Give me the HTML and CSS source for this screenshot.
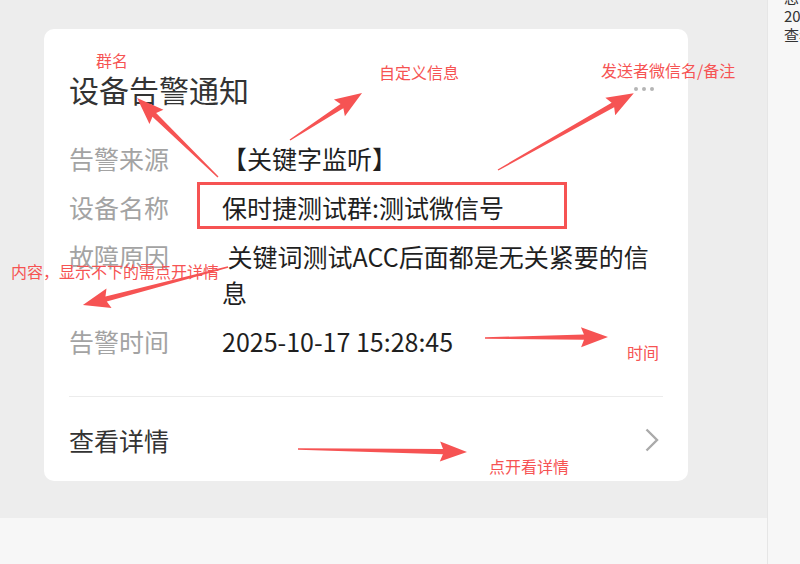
FILE: index.html
```html
<!DOCTYPE html>
<html lang="zh-CN">
<head>
    <meta charset="UTF-8">
    <meta name="viewport" content="width=device-width, initial-scale=1.0">
    <title>设备告警通知</title>
    <link rel="stylesheet" href="styles.css">
</head>
<body>

    <div class="app">
        <div class="main">
            <!-- 聊天区 -->
            <div class="chat">
                <div class="card">
                    <div class="card-head">
                        <div class="card-title">设备告警通知</div>
                        <div class="dots"><i></i><i></i><i></i></div>
                    </div>

                    <div class="rows">
                        <div class="row">
                            <div class="label">告警来源</div>
                            <div class="value">【关键字监听】</div>
                        </div>
                        <div class="row">
                            <div class="label">设备名称</div>
                            <div class="value">保时捷测试群:测试微信号</div>
                        </div>
                        <div class="row">
                            <div class="label">故障原因</div>
                            <div class="value">&nbsp;关键词测试ACC后面都是无关紧要的信息</div>
                        </div>
                        <div class="row">
                            <div class="label">告警时间</div>
                            <div class="value">2025-10-17 15:28:45</div>
                        </div>
                    </div>

                    <div class="card-foot">
                        <span>查看详情</span>
                        <svg class="chevron" width="14" height="24" viewBox="0 0 14 24">
                            <polyline points="1.5,1.5 12,12 1.5,22.5" fill="none" stroke="#aaaaaa" stroke-width="2.4"/>
                        </svg>
                    </div>
                </div>
            </div>
            <div class="footer"></div>
        </div>

        <!-- 右侧被截断的列表 -->
        <div class="side">
            <div>息</div>
            <div>2025-10-17 15:28:45</div>
            <div>查看详情</div>
        </div>
    </div>

    <!-- 标注 -->
    <div class="notes">
        <svg class="arrows" width="800" height="564" viewBox="0 0 800 564">
            <rect x="198.5" y="183.5" width="367" height="44" fill="none" stroke="#f65353" stroke-width="3"/>
            <g fill="#f65353">
                <path transform="translate(218 177) rotate(-135.7)" d="M0,-0.7 L89,-2.6 L86,-10 L113,0 L86,10 L89,2.6 L0,0.7Z"/>
                <path transform="translate(290 140) rotate(-33.1)" d="M0,-0.7 L62,-2.6 L59,-10 L86,0 L59,10 L62,2.6 L0,0.7Z"/>
                <path transform="translate(498 170) rotate(-29.5)" d="M0,-0.7 L132,-2.6 L129,-10 L156,0 L129,10 L132,2.6 L0,0.7Z"/>
                <path transform="translate(228 267) rotate(165.3)" d="M0,-0.7 L126,-2.6 L123,-10 L150,0 L123,10 L126,2.6 L0,0.7Z"/>
                <path transform="translate(485 338) rotate(-0.5)" d="M0,-0.7 L99,-2.6 L96,-10 L123,0 L96,10 L99,2.6 L0,0.7Z"/>
                <path transform="translate(298 449) rotate(1)" d="M0,-0.7 L145,-2.6 L142,-10 L169,0 L142,10 L145,2.6 L0,0.7Z"/>
            </g>
        </svg>
        <span class="note note-group">群名</span>
        <span class="note note-custom">自定义信息</span>
        <span class="note note-sender">发送者微信名/备注</span>
        <span class="note note-content">内容，显示不下的需点开详情</span>
        <span class="note note-time">时间</span>
        <span class="note note-detail">点开看详情</span>
    </div>

</body>
</html>
```

FILE: styles.css
```css
body {
    margin: 0;
    font-family: "Noto Sans CJK SC", "Noto Sans", sans-serif;
    background-color: #ededed;
    color: #333;
}

.app {
    display: flex;
    width: 800px;
    height: 564px;
    overflow: hidden;
    position: relative;
}

.main {
    width: 767px;
    display: flex;
    flex-direction: column;
}

.chat {
    height: 518px;
    padding: 29px 0 0 44px;
    box-sizing: border-box;
}

.footer {
    flex: 1;
    background-color: #f7f7f7;
}

.side {
    flex: 1;
    background-color: #f7f7f7;
    border-left: 1px solid #e6e6e6;
    padding-left: 16px;
    margin-top: -13px;
    font-size: 15px;
    line-height: 19px;
    color: #333;
    white-space: nowrap;
    overflow: hidden;
}

/* 卡片 */
.card {
    width: 644px;
    height: 452px;
    box-sizing: border-box;
    background-color: #fff;
    border-radius: 10px;
    padding: 40px 25px 0 25px;
}

.card-head {
    display: flex;
    justify-content: space-between;
    align-items: center;
}

.card-title {
    font-size: 30px;
    line-height: 40px;
    color: #333;
}

.dots {
    display: flex;
    gap: 4px;
    margin-right: 9px;
}

.dots i {
    width: 4px;
    height: 4px;
    border-radius: 50%;
    background-color: #b5b5b5;
}

.rows {
    display: flex;
    flex-direction: column;
    gap: 13px;
    margin-top: 31px;
}

.row {
    display: flex;
    font-size: 25px;
    line-height: 36px;
}

.label {
    width: 153px;
    flex-shrink: 0;
    color: #a3a3a3;
}

.value {
    flex: 1;
    color: #1f1f1f;
}

.card-foot {
    margin-top: 37px;
    border-top: 1px solid #ececec;
    padding: 25px 0 23px;
    display: flex;
    justify-content: space-between;
    align-items: center;
    font-size: 25px;
    line-height: 36px;
    color: #333;
}

.chevron {
    margin-right: 4px;
}

/* 标注层 */
.notes {
    position: absolute;
    left: 0;
    top: 0;
    width: 800px;
    height: 564px;
    pointer-events: none;
}

.arrows {
    position: absolute;
    left: 0;
    top: 0;
}

.note {
    position: absolute;
    font-size: 16px;
    line-height: 20px;
    color: #f65353;
    white-space: nowrap;
}

.note-group { left: 96px; top: 50px; }
.note-custom { left: 379px; top: 62px; }
.note-sender { left: 601px; top: 60px; }
.note-content { left: 11px; top: 261px; }
.note-time { left: 627px; top: 342px; }
.note-detail { left: 489px; top: 456px; }
```
